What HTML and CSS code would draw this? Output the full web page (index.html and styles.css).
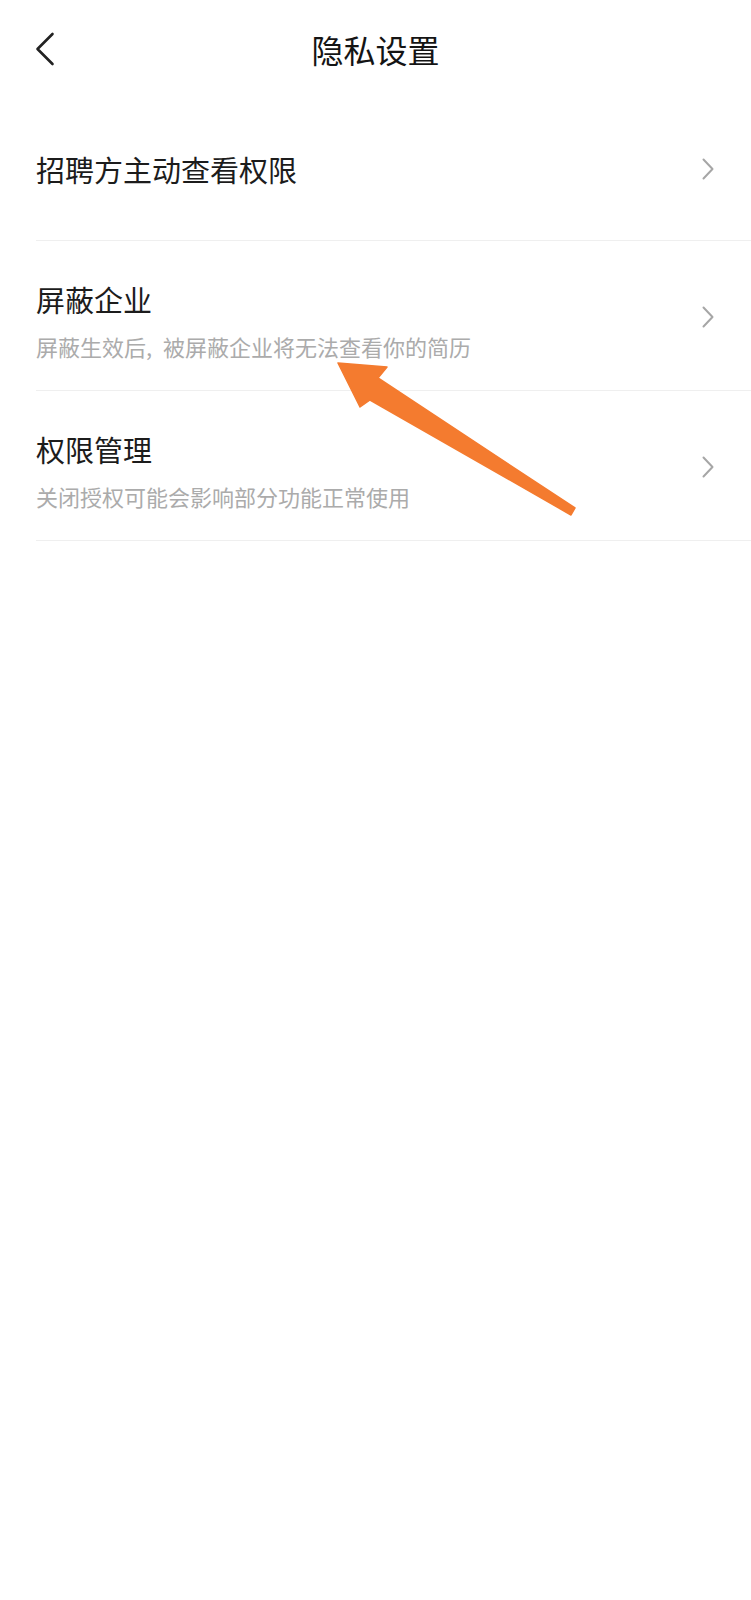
FILE: index.html
```html
<!DOCTYPE html>
<html lang="zh-CN">
<head>
<meta charset="utf-8">
<title>隐私设置</title>
<link rel="stylesheet" href="styles.css">
</head>
<body>
<div class="page">
  <header class="nav">
    <div class="nav-left">
      <svg class="back" width="20" height="34" viewBox="0 0 20 34" aria-hidden="true">
        <polyline points="17.5,2 2.5,17 17.5,32" fill="none" stroke="#222" stroke-width="2.6" stroke-linecap="round" stroke-linejoin="round"/>
      </svg>
    </div>
    <h1 class="nav-title">隐私设置</h1>
    <div class="nav-right"></div>
  </header>

  <ul class="list">
    <li class="item item-single">
      <div class="item-text">
        <div class="item-title">招聘方主动查看权限</div>
      </div>
      <svg class="chev" width="12" height="22" viewBox="0 0 12 22" aria-hidden="true">
        <polyline points="1.5,1.5 10.5,11 1.5,20.5" fill="none" stroke="#a6a6a6" stroke-width="2" stroke-linecap="round" stroke-linejoin="round"/>
      </svg>
    </li>
    <li class="item item-double">
      <div class="item-text">
        <div class="item-title">屏蔽企业</div>
        <div class="item-sub">屏蔽生效后,&#8194;被屏蔽企业将无法查看你的简历</div>
      </div>
      <svg class="chev" width="12" height="22" viewBox="0 0 12 22" aria-hidden="true">
        <polyline points="1.5,1.5 10.5,11 1.5,20.5" fill="none" stroke="#a6a6a6" stroke-width="2" stroke-linecap="round" stroke-linejoin="round"/>
      </svg>
    </li>
    <li class="item item-double">
      <div class="item-text">
        <div class="item-title">权限管理</div>
        <div class="item-sub">关闭授权可能会影响部分功能正常使用</div>
      </div>
      <svg class="chev" width="12" height="22" viewBox="0 0 12 22" aria-hidden="true">
        <polyline points="1.5,1.5 10.5,11 1.5,20.5" fill="none" stroke="#a6a6a6" stroke-width="2" stroke-linecap="round" stroke-linejoin="round"/>
      </svg>
    </li>
  </ul>

  <svg class="annotation" width="751" height="1600" viewBox="0 0 751 1600" aria-hidden="true">
    <polygon points="338,363 387,367 378,378 575,508 571,515 370,400 360,407" fill="#f47b2f" stroke="#f47b2f" stroke-width="1.5" stroke-linejoin="round"/>
  </svg>
</div>
</body>
</html>
```

FILE: styles.css
```css
* {
  box-sizing: border-box;
}

html, body {
  margin: 0;
  padding: 0;
  background: #ffffff;
}

body {
  font-family: "Noto Sans CJK SC", "Noto Sans", "Liberation Sans", sans-serif;
  color: #1f1f1f;
}

.page {
  position: relative;
  width: 751px;
  min-height: 1600px;
  background: #ffffff;
}

.nav {
  height: 98px;
  display: grid;
  grid-template-columns: 1fr auto 1fr;
  align-items: center;
}

.nav-left {
  display: flex;
  align-items: center;
  padding-left: 35px;
}

.back {
  display: block;
}

.nav-title {
  margin: 0;
  font-size: 32px;
  font-weight: 400;
  line-height: 40px;
  color: #141414;
  letter-spacing: 0;
}

.list {
  list-style: none;
  margin: 0;
  padding: 0;
}

.item {
  margin-left: 36px;
  padding-right: 37px;
  display: flex;
  align-items: center;
  justify-content: space-between;
  border-bottom: 1px solid #efefef;
}

.item-single {
  height: 143px;
}

.item-double {
  height: 150px;
  padding-top: 40px;
  padding-bottom: 30px;
}

.item-text {
  display: flex;
  flex-direction: column;
  gap: 15px;
}

.item-title {
  font-size: 29px;
  line-height: 36px;
  color: #1c1c1c;
}

.item-sub {
  font-size: 22px;
  line-height: 28px;
  color: #ababab;
}

.chev {
  display: block;
  flex: none;
  align-self: center;
}

.item-double .chev {
  margin-top: -7px;
}

.annotation {
  position: absolute;
  left: 0;
  top: 0;
  pointer-events: none;
}
```
